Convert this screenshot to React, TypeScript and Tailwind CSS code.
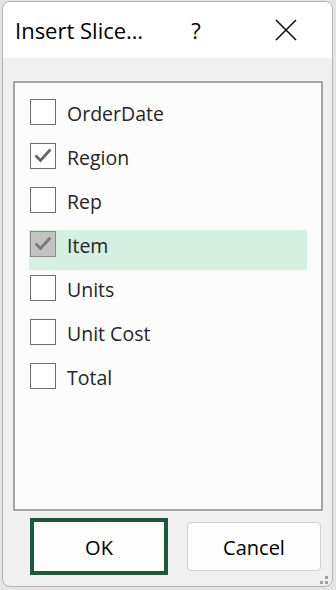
import React from 'react';

const fields = [
  { name: 'OrderDate', checked: false },
  { name: 'Region', checked: true },
  { name: 'Rep', checked: false },
  { name: 'Item', checked: true, active: true },
  { name: 'Units', checked: false },
  { name: 'Unit Cost', checked: false },
  { name: 'Total', checked: false },
];

function Check({ color }: { color: string }) {
  return (
    <svg width="20" height="20" viewBox="0 0 20 20" fill="none">
      <path d="M3.5 10.5 L7.5 14.5 L16.5 4.5" stroke={color} strokeWidth="2.8" strokeLinecap="square" />
    </svg>
  );
}

export default function App() {
  return (
    <div className="w-[336px] h-[590px] bg-[#e4e4e4] pt-[1px] pl-[2px]" style={{ fontFamily: '"Open Sans", "Noto Sans", sans-serif' }}>
      <div className="relative w-[331px] h-[586px] rounded-[8px] border border-[#b4b4b4] overflow-hidden flex flex-col bg-[#f0f0f0]">
        {/* title bar */}
        <div className="h-[56px] bg-white flex items-center shrink-0">
          <span className="ml-[12px] text-[22px] text-black">Insert Slice…</span>
          <span className="ml-[48px] text-[22px] text-black">?</span>
          <svg className="ml-[74px]" width="22" height="22" viewBox="0 0 22 22">
            <path d="M1 1 L21 21 M21 1 L1 21" stroke="#111" strokeWidth="1.6" />
          </svg>
        </div>

        {/* list */}
        <div className="mt-[23px] ml-[10px] w-[310px] h-[430px] border-2 border-[#a6a6a6] bg-[#fcfcfc] pt-[15px] px-[14px] flex flex-col gap-[4px]">
          {fields.map((f) => (
            <div
              key={f.name}
              className={`h-[40px] flex items-start pt-[1px] ${f.active ? 'bg-[#d3f0e0]' : ''}`}
            >
              <div
                className={`ml-[1px] w-[26px] h-[26px] border flex items-center justify-center ${
                  f.active ? 'bg-[#c2c2c2] border-[#8a8a8a]' : 'bg-white border-[#6e6e6e]'
                }`}
              >
                {f.checked && <Check color={f.active ? '#7a7a7a' : '#666'} />}
              </div>
              <span className="ml-[11px] pt-[2px] text-[19.5px] leading-[26px] text-[#262626]">{f.name}</span>
            </div>
          ))}
        </div>

        {/* buttons */}
        <div className="flex items-center mt-[7px] ml-[27px]">
          <button className="w-[138px] h-[57px] border-[4px] border-[#1a5a3a] bg-[#fdfdfd] pt-[2px] text-[20px] text-black">
            OK
          </button>
          <button className="ml-[19px] w-[134px] h-[49px] rounded-[4px] border border-[#d0d0d0] bg-[#fdfdfd] pt-[2px] text-[20px] text-black">
            Cancel
          </button>
        </div>

        {/* resize grip */}
        <div className="absolute right-[4px] bottom-[7px] w-[3px] h-[3px] bg-[#a0a0a0]" />
        <div className="absolute right-[4px] bottom-[2px] w-[3px] h-[3px] bg-[#a0a0a0]" />
        <div className="absolute right-[9px] bottom-[2px] w-[3px] h-[3px] bg-[#a0a0a0]" />
      </div>
    </div>
  );
}
